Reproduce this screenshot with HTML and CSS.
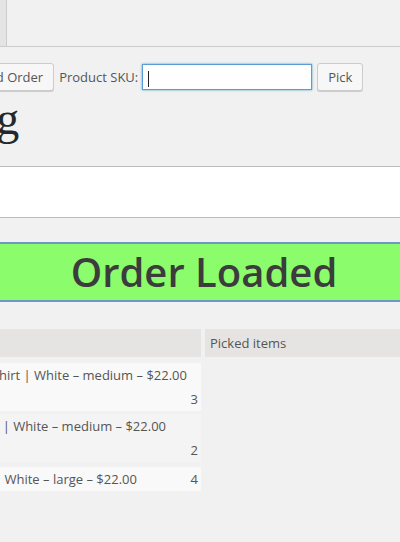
FILE: index.html
```html
<!DOCTYPE html>
<html lang="en">
<head>
    <meta charset="UTF-8">
    <meta name="viewport" content="width=device-width, initial-scale=1.0">
    <title>Order Picking</title>
    <link rel="stylesheet" href="styles.css">
</head>
<body>
    <div class="page">
        <div class="nav-tabs">
            <span class="nav-tab">Orders</span>
        </div>

        <div class="toolbar">
            <button class="button" id="loadButton">Load Order</button>
            <label for="productSku">Product SKU:</label>
            <span class="sku-field">
                <input type="text" id="productSku" name="productSku">
                <span class="caret"></span>
            </span>
            <button class="button" id="pickButton">Pick</button>
        </div>

        <h1 class="page-title">Order Picking</h1>

        <div class="order-box"></div>

        <div class="notice">Order Loaded</div>

        <div class="items">
            <div class="col col-order">
                <div class="col-head">Order items</div>
                <div class="item">
                    <span class="name">Happy Ninja T-Shirt | White – medium – $22.00</span>
                    <span class="qty">3</span>
                </div>
                <div class="item item-alt">
                    <span class="name">Ninja Silhouette | White – medium – $22.00</span>
                    <span class="qty">2</span>
                </div>
                <div class="item item-last">
                    <span class="name">Ship Your Idea | White – large – $22.00</span>
                    <span class="qty">4</span>
                </div>
            </div>
            <div class="col col-picked">
                <div class="col-head">Picked items</div>
            </div>
        </div>
    </div>
</body>
</html>
```

FILE: styles.css
```css
html, body {
    margin: 0;
    overflow: hidden;
}

body {
    background-color: #f1f1f1;
    font-family: "Open Sans", sans-serif;
    font-size: 13px;
    color: #555;
}

/* the screenshot is scrolled, so the page starts left of the window */
.page {
    margin-left: -240px;
    width: 888px;
}

.nav-tabs {
    display: flex;
    height: 46px;
    padding-left: 147px;
    border-bottom: 1px solid #ccc;
}

.nav-tab {
    width: 100px;
    box-sizing: border-box;
    background-color: #e4e4e4;
    border-right: 1px solid #ccc;
    color: transparent;
}

.toolbar {
    display: flex;
    align-items: center;
    height: 28px;
    margin-top: 16px;
    padding-left: 203px;
}

.toolbar label {
    margin: 0 4px 0 5px;
}

.button {
    height: 28px;
    padding: 0 10px;
    border: 1px solid #ccc;
    border-radius: 3px;
    background-color: #f7f7f7;
    box-shadow: 0 1px 0 #ccc;
    font: 13px/26px "Open Sans", sans-serif;
    color: #555;
}

#pickButton {
    margin-left: 5px;
}

.sku-field {
    position: relative;
    display: inline-flex;
}

.sku-field input {
    width: 170px;
    height: 26px;
    box-sizing: border-box;
    padding: 0 6px;
    border: 1px solid #5b9dd9;
    border-radius: 0;
    background-color: #fff;
    box-shadow: 0 0 2px rgba(30, 140, 190, 0.8);
    outline: none;
}

.caret {
    position: absolute;
    left: 6px;
    top: 7px;
    width: 1px;
    height: 16px;
    background-color: #222;
}

.page-title {
    margin: 0;
    font: normal 46px/56px "Liberation Serif", serif;
    color: #23282d;
}

.order-box {
    height: 50px;
    margin-top: 19px;
    background-color: #fff;
    border-top: 1px solid #bbb;
    border-bottom: 1px solid #bbb;
}

.notice {
    height: 56px;
    margin-top: 24px;
    border-top: 2px solid #6d98c6;
    border-bottom: 2px solid #6d98c6;
    background-color: #8bfc6b;
    text-align: center;
    font: 600 40px/56px "Open Sans", sans-serif;
    color: #3c3c3c;
}

.items {
    display: flex;
    gap: 4px;
    margin-top: 27px;
    padding-left: 135px;
}

.col-order {
    width: 306px;
}

.col-picked {
    flex: 1;
}

.col-head {
    height: 28px;
    padding: 0 5px;
    line-height: 28px;
    background-color: #e5e4e2;
}

.item {
    display: flex;
    flex-wrap: wrap;
    margin-top: 6px;
    padding: 0 3px 0 8px;
    line-height: 24px;
    background-color: #f9f9f9;
}

.item-alt {
    margin-top: 3px;
    background-color: #f4f4f4;
}

.item-last {
    margin-top: 5px;
}

.qty {
    width: 50px;
    margin-left: auto;
    text-align: right;
}
```
